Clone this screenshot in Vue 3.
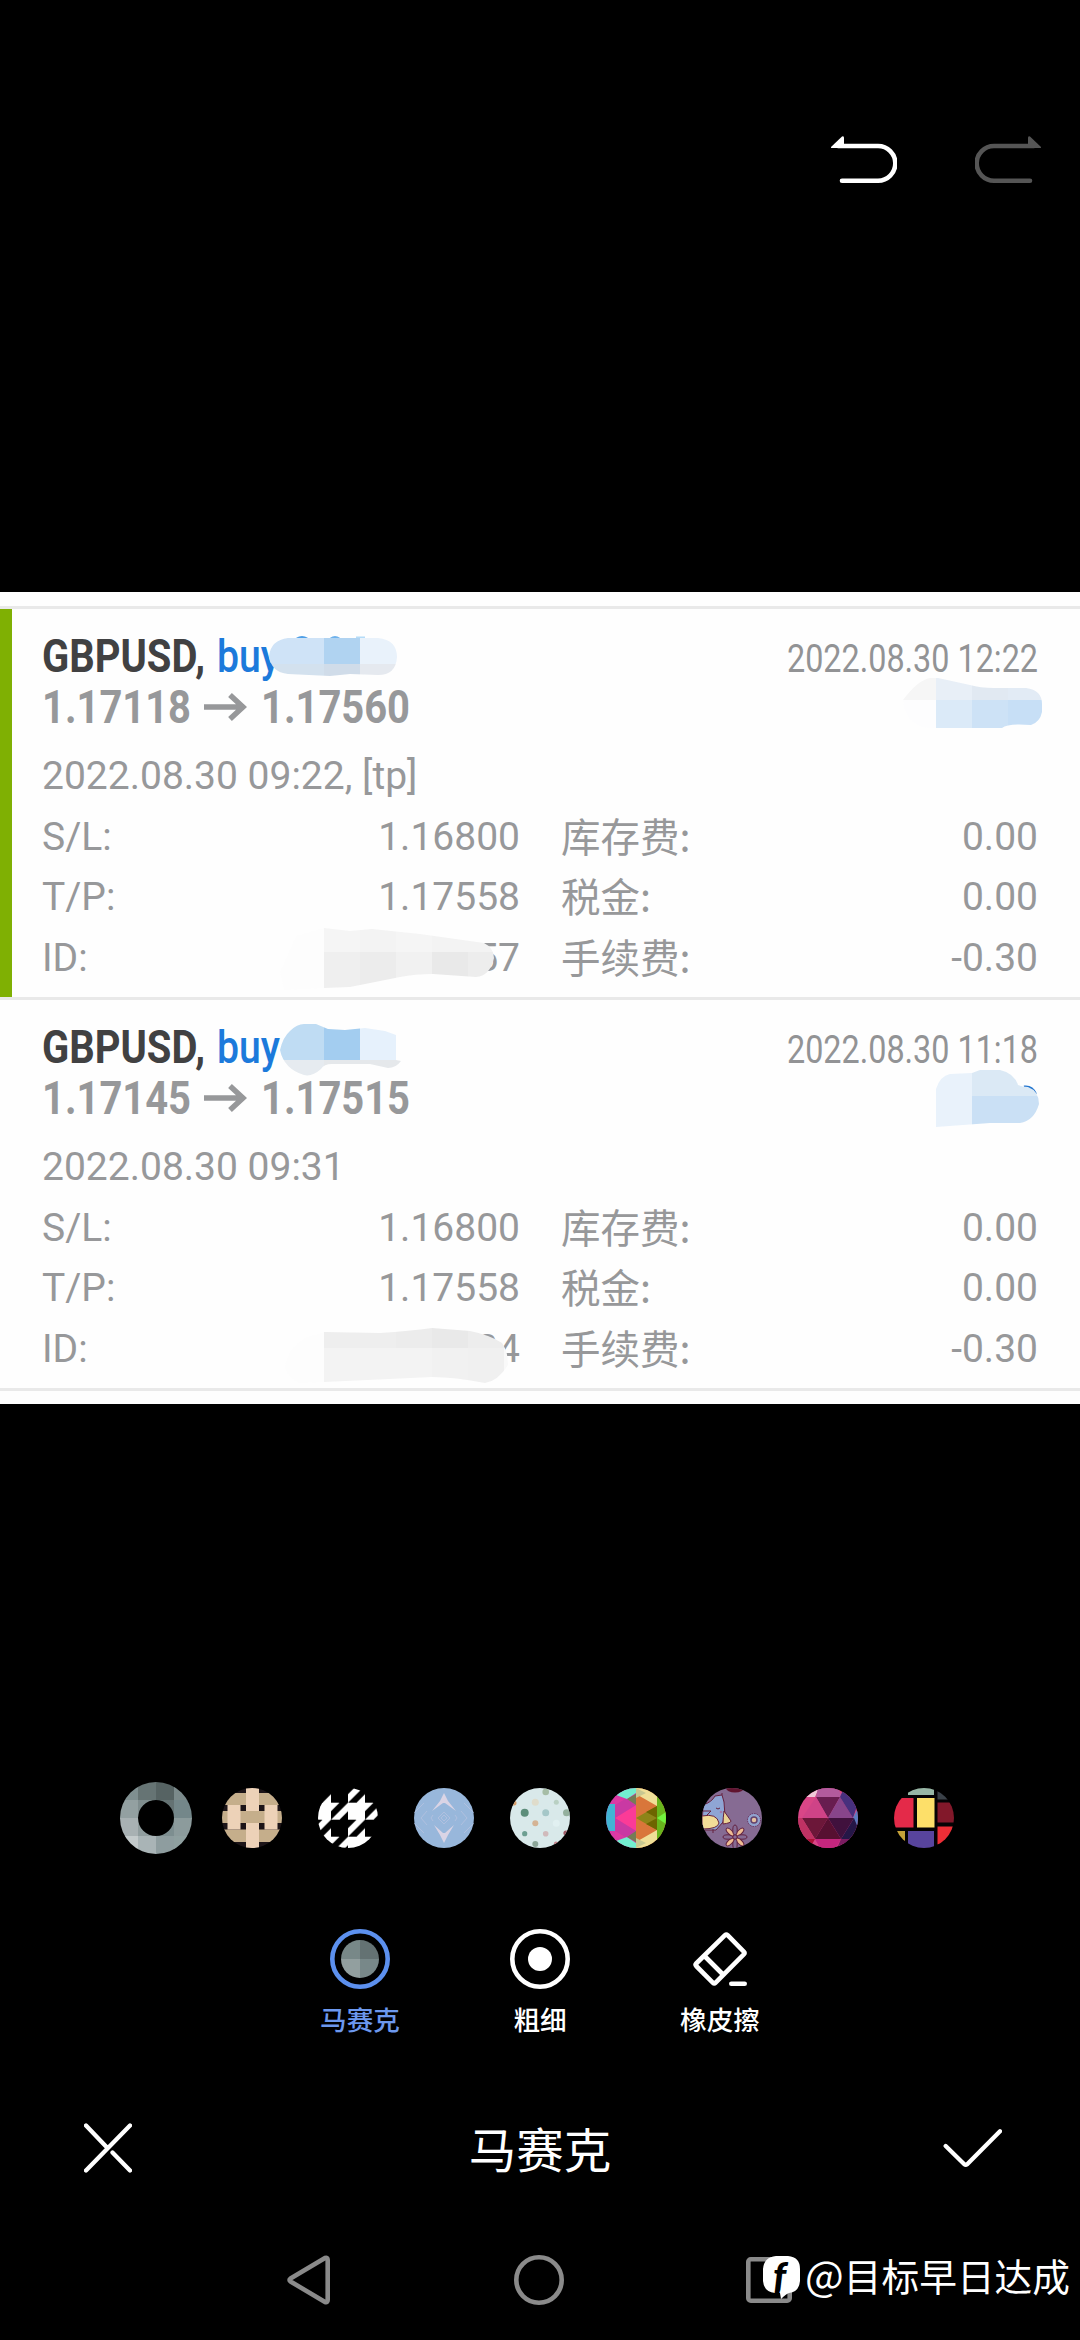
<script setup>
import { h } from 'vue'

// One line of condensed type, squeezed to a fixed width
const FitText = (props) =>
  h('svg', { width: props.w, height: 51, style: { overflow: 'visible' } }, [
    h('text', {
      x: 0, y: 36, textLength: props.w, lengthAdjust: 'spacingAndGlyphs',
      fill: props.color, 'font-size': props.size, 'font-weight': props.weight,
      'font-family': 'Roboto, sans-serif'
    }, props.text)
  ])
FitText.props = ['w', 'size', 'weight', 'color', 'text']

const records = [
  {
    open: '1.17118', close: '1.17560', closed: '2022.08.30 12:22',
    opened: '2022.08.30 09:22, [tp]', id: '57', profit: true,
    marks: [
      {
        shape: 'M288 32H378Q397 34 397 51Q396 69 378 69L350 68L330 70L288 68Q271 66 269 50Q271 34 288 32Z',
        blocks: [
          [268, 30, 56, 28, '#cfe3f7'], [324, 30, 36, 28, '#b0d3f1'], [360, 30, 38, 28, '#e9f2fb'],
          [268, 58, 56, 14, '#d3e1ee'], [324, 58, 36, 14, '#d0dce9'], [360, 58, 38, 14, '#e5e9ef']
        ]
      },
      {
        shape: 'M280 366L296 330L324 322L350 325L372 323L420 328L484 337Q494 342 494 352Q490 370 476 371L433 368Q415 368 400 371L350 381L324 382L284 384Z',
        blocks: [
          [278, 320, 46, 66, '#fdfdfd'],
          [324, 320, 36, 26, '#f5f5f5'], [360, 320, 36, 26, '#f3f3f3'], [396, 320, 36, 26, '#f5f5f5'], [432, 320, 64, 26, '#f3f3f3'],
          [324, 346, 36, 40, '#efefef'], [360, 346, 36, 40, '#ececec'], [396, 346, 36, 40, '#f1f1f1'], [432, 346, 36, 40, '#e9e9e9'], [468, 346, 28, 40, '#ededed']
        ]
      },
      {
        shape: 'M903 94Q918 74 930 72L938 72L970 79Q980 82 994 82H1026Q1042 84 1042 98V106Q1040 116 1031 119Q1008 117 1002 122H930Q905 120 903 94Z',
        blocks: [
          [900, 70, 36, 24, '#f6f6f6'], [936, 70, 36, 24, '#e8eff7'], [972, 70, 36, 24, '#e1e9f2'], [1008, 70, 36, 24, '#e2ebf5'],
          [900, 94, 36, 30, '#fdfdfe'], [936, 94, 36, 30, '#dbeaf8'], [972, 94, 36, 30, '#cde2f6'], [1008, 94, 36, 30, '#c7dff6']
        ]
      }
    ],
    specks: [
      { d: 'M297 33Q302 30 307 33', c: '#4f9fe6' },
      { d: 'M331 33Q335 30 339 33', c: '#6fb2ec' },
      { d: 'M356 32L365 32', c: '#b5dcf8' }
    ]
  },
  {
    open: '1.17145', close: '1.17515', closed: '2022.08.30 11:18',
    opened: '2022.08.30 09:31', id: '34', profit: false,
    marks: [
      {
        shape: 'M280 53Q283 40 290 34Q297 27 304 27H316L328 32L345 33L365 31L385 34L396 38V63L401 64Q396 71 388 71L370 67H332Q324 67 321 72Q312 80 304 78Q284 72 280 53Z',
        blocks: [
          [278, 25, 46, 38, '#bfdcf3'], [324, 25, 36, 38, '#a3cdf0'], [360, 25, 42, 38, '#e6f1fc'],
          [278, 63, 46, 18, '#e6ebf0'], [324, 63, 80, 18, '#e5e8eb']
        ]
      },
      {
        shape: 'M285 370Q287 352 305 341L324 335L380 336Q410 334 432 331L470 334Q490 338 502 346Q508 354 508 368Q498 384 485 386Q455 380 432 380L324 385L300 386Q288 382 285 370Z',
        blocks: [
          [283, 328, 41, 60, '#fdfdfd'],
          [324, 328, 72, 23, '#eeeeee'], [396, 328, 36, 23, '#ececec'], [432, 328, 36, 23, '#e9e9e9'], [468, 328, 42, 23, '#ededed'],
          [324, 351, 108, 38, '#f3f3f3'], [432, 351, 36, 38, '#f1f1f1'], [468, 351, 36, 38, '#f0f0f0'], [504, 351, 6, 38, '#f9f9f9']
        ]
      },
      {
        shape: 'M936 92Q940 79 950 77L972 76L980 73H1000Q1014 76 1018 88Q1022 90 1028 90Q1039 94 1039 107Q1034 124 1020 126L990 126L936 130Z',
        blocks: [
          [934, 71, 38, 60, '#e9f2fb'], [972, 71, 70, 28, '#dbe9f5'], [972, 99, 70, 32, '#cae0f5']
        ]
      }
    ],
    specks: [{ d: 'M1024 90Q1032 89 1035.500 97', c: '#2476cf' }]
  }
]

const ringTiles = [
  ['#7f8f90', '#667474', '#566363', '#7b8a8b'],
  ['#93a0a1', '#7f8d8e', '#647273', '#74878a'],
  ['#a8b1b3', '#909d9e', '#7d8e90', '#8c9b9c'],
  ['#c3cacb', '#a9b4b6', '#8e9d9f', '#8fa0a0']
]
</script>

<template>
  <main class="screen">
    <header class="history">
      <svg width="66" height="50" viewBox="831 134 66 50">
        <path d="M838 146H878A17.3 17.3 0 0 1 878 180.700H842" fill="none" stroke="#fff" stroke-width="4.600" stroke-linecap="round" />
        <path d="M831 147L842 136.500Q844 135.500 844 138V148H832Q830.500 148 831 147Z" fill="#fff" />
      </svg>
      <svg width="66" height="50" viewBox="975 134 66 50">
        <g transform="translate(1872 0) scale(-1 1)">
          <path d="M838 146H878A17.3 17.3 0 0 1 878 180.700H842" fill="none" stroke="#555" stroke-width="4.600" stroke-linecap="round" />
          <path d="M831 147L842 136.500Q844 135.500 844 138V148H832Q830.500 148 831 147Z" fill="#555" />
        </g>
      </svg>
    </header>

    <section class="photo">
      <article v-for="(r, i) in records" :key="i" class="record" :class="{ profit: r.profit }">
        <div class="line">
          <FitText :w="163" :size="46.5" :weight="700" color="#414142" text="GBPUSD," />
          <FitText class="side" :w="63" :size="46.5" :weight="500" color="#1c7adb" text="buy" />
          <FitText class="end" :w="251" :size="38.5" :weight="400" color="#929395" :text="r.closed" />
        </div>
        <div class="line">
          <FitText :w="149" :size="46" :weight="700" color="#97989a" :text="r.open" />
          <svg class="arrow" width="43" height="51" viewBox="0 0 43 51">
            <path d="M0 20H39M26 8L39 20L26 32" fill="none" stroke="#97989a" stroke-width="5.500" />
          </svg>
          <FitText :w="149" :size="46" :weight="700" color="#97989a" :text="r.close" />
        </div>
        <div class="details">
          <div class="row"><span>{{ r.opened }}</span></div>
          <div class="row">
            <span class="key">S/L:</span><span class="val">1.16800</span>
            <span class="name">库存费:</span><span class="val">0.00</span>
          </div>
          <div class="row">
            <span class="key">T/P:</span><span class="val">1.17558</span>
            <span class="name">税金:</span><span class="val">0.00</span>
          </div>
          <div class="row">
            <span class="key">ID:</span><span class="val">{{ r.id }}</span>
            <span class="name">手续费:</span><span class="val">-0.30</span>
          </div>
        </div>
        <svg class="strokes" width="1080" height="391" viewBox="0 0 1080 391">
          <path v-for="(s, k) in r.specks" :key="'s' + k" :d="s.d" fill="none" :stroke="s.c" stroke-width="3" />
          <g v-for="(m, k) in r.marks" :key="k">
            <clipPath :id="`mark-${i}-${k}`"><path :d="m.shape" /></clipPath>
            <g :clip-path="`url(#mark-${i}-${k})`" shape-rendering="crispEdges">
              <rect v-for="(b, n) in m.blocks" :key="n" :x="b[0]" :y="b[1]" :width="b[2]" :height="b[3]" :fill="b[4]" />
            </g>
          </g>
        </svg>
      </article>
      <div class="tail"></div>
    </section>

    <svg class="defs" width="0" height="0">
      <clipPath id="disc"><circle r="30" /></clipPath>
      <clipPath id="ring"><path clip-rule="evenodd" d="M-36 0A36 36 0 1 1 36 0A36 36 0 1 1 -36 0ZM-18 0A18 18 0 1 0 18 0A18 18 0 1 0 -18 0Z" /></clipPath>
      <clipPath id="mini"><circle r="19" /></clipPath>
      <pattern id="houndstooth" x="0" y="-15.300" width="34" height="34" patternUnits="userSpaceOnUse">
        <path d="M0 0H25.500L17 8.500V17H0ZM17 17L34 0V8.500L25.500 17ZM0 25.500L8.500 17H17L0 34ZM17 25.500V34H8.500Z" fill="#fff" />
      </pattern>
    </svg>

    <section class="palette">
      <svg width="72" height="72" viewBox="-36 -36 72 72">
        <g clip-path="url(#ring)">
          <template v-for="(row, y) in ringTiles" :key="y">
            <rect v-for="(c, x) in row" :key="x" :x="x * 18 - 36" :y="y * 18 - 36" width="18.500" height="18.500" :fill="c" />
          </template>
        </g>
      </svg>

      <svg width="60" height="60" viewBox="-30 -30 60 60">
        <g clip-path="url(#disc)">
          <rect x="-30" y="-30" width="60" height="60" fill="#1c1418" />
          <g fill="#c5ae8b">
            <rect x="-30" y="-25" width="60" height="12" /><rect x="-30" y="-7" width="60" height="12" /><rect x="-30" y="11.500" width="60" height="12.500" />
          </g>
          <path d="M-6 -30H7V-7H-6ZM-6 5H7V30H-6ZM-24.500 -13H-11.500V11.500H-24.500ZM12.500 -13H25.500V11.500H12.500Z" fill="#edd2b8" />
        </g>
      </svg>

      <svg width="60" height="60" viewBox="-30 -30 60 60">
        <circle r="30" fill="url(#houndstooth)" />
      </svg>

      <svg width="60" height="60" viewBox="-30 -30 60 60">
        <g clip-path="url(#disc)">
          <rect x="-30" y="-30" width="60" height="60" fill="#98b7db" />
          <path d="M0 -25L4 -17L12 -7L1 -15H-1L-12 -7L-4 -17ZM0 25L4 17L10 7L1 15H-1L-10 7L-4 17Z" fill="#dad4e5" />
          <g fill="none" stroke="#b0c0df" stroke-width="1">
            <path d="M0 -6L6 0L0 6L-6 0ZM-17 -7L-23 0L-17 7M17 -7L23 0L17 7M-11 -3L-13 0L-11 3M11 -3L13 0L11 3M-30 -5L-20 -15M-30 5L-20 15M30 -5L20 -15M30 5L20 15" />
            <path d="M0 -3L3 0L0 3L-3 0Z" />
          </g>
        </g>
      </svg>

      <svg width="60" height="60" viewBox="-30 -30 60 60">
        <g clip-path="url(#disc)">
          <rect x="-30" y="-30" width="60" height="60" fill="#d9e9ea" />
          <circle cx="5.700" cy="-26" r="3.300" fill="#a6bda6" /><circle cx="-4.700" cy="-15.700" r="3.500" fill="#dfdccb" />
          <circle cx="16.300" cy="-15.700" r="2.500" fill="#b9d0c3" /><circle cx="-26" cy="-15" r="2.500" fill="#d99e6b" />
          <circle cx="-15.300" cy="-5.300" r="4" fill="#5d8e7b" /><circle cx="5.700" cy="-5.300" r="3.500" fill="#a5c7c8" />
          <circle cx="26.500" cy="-5.300" r="3.500" fill="#94b09e" /><circle cx="-4.700" cy="5.300" r="3" fill="#d4b394" />
          <circle cx="16.300" cy="5.300" r="3.500" fill="#e1f0f1" /><circle cx="-15.300" cy="15.700" r="2.600" fill="#6d9f92" />
          <circle cx="5.700" cy="15.700" r="2.800" fill="#d0babb" /><circle cx="26" cy="15" r="2.600" fill="#9d5964" />
          <circle cx="-4.700" cy="26" r="3" fill="#8ca699" /><circle cx="16" cy="25.500" r="2" fill="#c5828a" />
        </g>
      </svg>

      <svg width="60" height="60" viewBox="-30 -30 60 60">
        <g clip-path="url(#disc)">
          <rect x="-30" y="-30" width="31" height="60" fill="#d63aa6" />
          <rect x="0" y="-30" width="30" height="60" fill="#d9763a" />
          <path d="M-30 -14H-21V13H-30Z" fill="#41b4d4" />
          <path d="M-21 -22L0 -12V12L-21 22Z" fill="#dd39a3" />
          <path d="M-21 0L0 -13V13Z" fill="#fb3b97" />
          <path d="M-21 -13L-9 -20L0 -13L-21 0ZM-21 13L-9 20L0 13L-21 0Z" fill="#c939a3" />
          <path d="M-20 -23L-9 -30H0V-25L-9 -19ZM-20 23L-9 30H0V25L-9 19Z" fill="#72efd0" />
          <path d="M-9 -19L0 -24V-13ZM-9 19L0 24V13Z" fill="#747d56" />
          <path d="M0 -30H21V-12L0 -24ZM0 30H21V12L0 24Z" fill="#efdf97" />
          <path d="M0 -30L10 -25L0 -20ZM0 30L10 25L0 20Z" fill="#c7c891" />
          <path d="M0 0L21 -12V12Z" fill="#8d8418" /><path d="M10 -6L21 -12V0ZM10 6L21 12V0Z" fill="#6d6400" />
          <path d="M21 -30H30V30H21Z" fill="#68b51d" /><path d="M21 0L30 -6V6Z" fill="#72f33f" />
        </g>
      </svg>

      <svg width="60" height="60" viewBox="-30 -30 60 60">
        <g clip-path="url(#disc)">
          <rect x="-30" y="-30" width="60" height="60" fill="#866b93" />
          <ellipse cx="3" cy="-30" rx="9" ry="4.500" fill="#61142f" />
          <g stroke="#66223f" stroke-width="1">
            <path d="M-29 -13Q-20 -16 -17 -22L-10 -23L-8 -16Q-6 -5 -9 4L-16 12H-30Z" fill="#8fa5d4" />
            <path d="M-8 -7L-1 3Q-1 5 -9 6Q-9 0 -8 -7Z" fill="#ead394" />
            <path d="M-30 -2Q-15 -5 -13 5Q-14 11 -30 11Z" fill="#f2dc98" />
            <path d="M-30 -7H-21L-25 -3M-16 -10Q-14 -8 -12 -10M-19 11V15M-10 -23L-10 -25" fill="none" />
          </g>
          <circle cx="-11" cy="-6" r="1.300" fill="#a37baf" />
          <circle cx="22" cy="2" r="6.500" fill="#91a3cf" stroke="#66305c" stroke-width="1" stroke-dasharray="1.500 1" />
          <circle cx="22" cy="2" r="3" fill="#e5c0a1" stroke="#63436d" stroke-width="1.500" />
          <g stroke="#622240" stroke-width="1">
            <ellipse v-for="a in 8" :key="a" cx="3" cy="12" rx="2.200" ry="5" :transform="`rotate(${a * 45} 3 19)`" :fill="a % 2 ? '#f0bd93' : '#866b93'" />
          </g>
        </g>
      </svg>

      <svg width="60" height="60" viewBox="-30 -30 60 60">
        <g clip-path="url(#disc)">
          <rect x="-30" y="-30" width="60" height="60" fill="#d94687" />
          <path d="M-30 -21L-20 -30H-9L-13 -21Z" fill="#efcad8" /><path d="M-10 -30H10L14 -21H-12Z" fill="#b25b9d" />
          <path d="M-12 -21H12L0 0Z" fill="#681d50" /><path d="M-12 -21L0 0H-26Z" fill="#cf4387" />
          <path d="M12 -21L25 0H0Z" fill="#88458b" /><path d="M12 -21L16 -30L30 -21V-15L25 0Z" fill="#47307d" />
          <path d="M30 -10V10L25 0Z" fill="#5b7dc1" /><path d="M-26 0H0L-13 21Z" fill="#6c1739" />
          <path d="M0 0L13 21H-13Z" fill="#571031" /><path d="M0 0H26L13 21Z" fill="#40113d" />
          <path d="M26 0L30 10L20 30L13 21Z" fill="#251747" /><path d="M-26 0L-13 21H-30V0Z" fill="#bf3263" />
          <path d="M-30 21H-13L-18 30Z" fill="#ad1137" /><path d="M-13 21H13L8 30H-8Z" fill="#c5267e" /><path d="M13 21H24L9 30Z" fill="#7b1c61" />
        </g>
      </svg>

      <svg width="60" height="60" viewBox="-30 -30 60 60">
        <g clip-path="url(#disc)">
          <rect x="-30" y="-30" width="60" height="60" fill="#050305" />
          <rect x="-16" y="-30" width="26" height="7" fill="#98b7a6" /><rect x="13.500" y="-30" width="17" height="11.500" fill="#3a4148" />
          <rect x="-30" y="-20" width="19.500" height="29.500" fill="#e42a49" /><rect x="-7" y="-20" width="17.500" height="29.500" fill="#fddf69" />
          <rect x="13.500" y="-15.500" width="17" height="20" fill="#82182a" /><rect x="-30" y="13" width="11" height="17" fill="#c5a139" />
          <rect x="-16" y="13" width="26" height="17" fill="#58449d" /><rect x="13.500" y="8.500" width="17" height="18" fill="#ed2e36" />
        </g>
      </svg>
    </section>

    <nav class="tools">
      <div class="tool active">
        <svg width="60" height="60" viewBox="-30 -30 60 60">
          <circle r="27.700" fill="none" stroke="#5c90ee" stroke-width="4.600" />
          <g clip-path="url(#mini)">
            <rect x="-19" y="-19" width="19" height="19" fill="#788888" /><rect y="-19" width="19" height="19" fill="#647273" />
            <rect x="-19" width="19" height="19" fill="#929f9f" /><rect width="19" height="19" fill="#788889" />
          </g>
        </svg>
        <span>马赛克</span>
      </div>
      <div class="tool">
        <svg width="60" height="60" viewBox="-30 -30 60 60">
          <circle r="27.700" fill="none" stroke="#fff" stroke-width="4.600" /><circle r="12" fill="#fff" />
        </svg>
        <span>粗细</span>
      </div>
      <div class="tool">
        <svg width="60" height="60" viewBox="-30 -30 60 60" fill="none" stroke="#fff" stroke-width="4.600" stroke-linecap="round" stroke-linejoin="round">
          <path d="M5 -23.800Q6.300 -25 7.600 -23.800L24 -7.200Q25.200 -6 24 -4.800L-4.600 23.800Q-5.800 25 -7 23.800L-23.800 7Q-25 5.700 -23.800 4.500ZM-15.500 -3L3 15.500M11.300 24.700H24.700" />
        </svg>
        <span>橡皮擦</span>
      </div>
    </nav>

    <footer class="confirm">
      <svg width="48" height="50" viewBox="-24 -25 48 50" fill="none" stroke="#fff" stroke-width="4.300" stroke-linecap="round">
        <path d="M-22 -22.500L-1 -0.500M22 -22.500L-22 22.500M4.500 4.500L22 22.500" />
      </svg>
      <h1>马赛克</h1>
      <svg width="59" height="40" viewBox="943 2127 59 40" fill="none" stroke="#fff" stroke-width="4.300" stroke-linecap="round" stroke-linejoin="round">
        <path d="M945.700 2145L964.300 2163.200Q965.700 2164.200 967.200 2163.200L1000 2130.300" />
      </svg>
    </footer>

    <div class="system">
      <svg width="44" height="52" viewBox="287 2254 44 52" fill="none" stroke="#8a8a8a" stroke-width="4.600" stroke-linejoin="round">
        <path d="M290.500 2278.500L325 2258Q327.700 2257 327.700 2260V2300Q327.700 2303 325 2302L290.500 2281.500Q288.500 2280 290.500 2278.500Z" />
      </svg>
      <svg width="50" height="50" viewBox="-25 -25 50 50"><circle r="22.700" fill="none" stroke="#8a8a8a" stroke-width="4.600" /></svg>
      <svg width="46" height="46" viewBox="0 0 46 46"><rect x="2.300" y="2.300" width="41.400" height="41.400" rx="2.500" fill="none" stroke="#8a8a8a" stroke-width="4.600" /></svg>
      <div class="watermark">
        <svg class="logo" width="38" height="43" viewBox="0 0 38 43">
          <path d="M13 0H25Q37 1 37 13V25Q36 36 26 37Q23 38 18 43L17 37H12Q1 36 0 25V13Q1 1 13 0Z" fill="#fff" />
          <text x="10" y="35" font-family="Lato, sans-serif" font-size="39" font-weight="900" font-style="italic" fill="#000">f</text>
        </svg>
        <span><span class="at">@</span>目标早日达成</span>
      </div>
    </div>
  </main>
</template>

<style>
body { background: #000; }
</style>

<style scoped>
.screen {
  width: 1080px;
  height: 2340px;
  background: #000;
  color: #fff;
  overflow: hidden;
  display: flex;
  flex-direction: column;
  font-family: Roboto, "Noto Sans CJK SC", sans-serif;
}
.screen svg { display: block; flex: none; }
.history {
  height: 592px;
  box-sizing: border-box;
  padding: 134px 39px 0 0;
  display: flex;
  justify-content: flex-end;
  align-items: flex-start;
  gap: 78px;
}
.photo {
  height: 812px;
  box-sizing: border-box;
  padding-top: 14px;
  background: #fefefe;
}
.record {
  position: relative;
  height: 391px;
  box-sizing: border-box;
  border-top: 3px solid #e9e9e9;
  padding: 27px 42px 0 42px;
}
.record.profit {
  background: linear-gradient(#7fb003, #7fb003) left top / 12px 100% no-repeat;
}
.line { display: flex; height: 51px; }
.side { margin-left: 12px; }
.end { margin-left: auto; }
.arrow { margin: 0 14px 0 13px; }
.details {
  margin-top: 8px;
  font-size: 39px;
  line-height: 60.600px;
  color: #97989a;
}
.row { display: flex; height: 60.600px; white-space: nowrap; }
.key { width: 100px; }
.key + .val { width: 378px; }
.val { text-align: right; }
.name {
  font-family: "Noto Sans CJK SC", sans-serif;
  font-size: 39.500px;
  line-height: 56.600px;
  margin-left: 41px;
  flex: 1;
}
.strokes { position: absolute; left: 0; top: -3px; }
.tail { height: 3px; background: #e9e9e9; }
.defs { position: absolute; }
.palette {
  margin-top: 378px;
  height: 72px;
  padding-left: 120px;
  display: flex;
  align-items: center;
  gap: 36px;
}
.palette svg:first-child { margin-right: -6px; }
.tools {
  margin-top: 75px;
  display: flex;
  justify-content: center;
}
.tool {
  width: 180px;
  display: flex;
  flex-direction: column;
  align-items: center;
  gap: 10px;
  font: 500 26.600px/40px "Noto Sans CJK SC", sans-serif;
}
.active { color: #6c98ee; }
.confirm {
  margin-top: 70px;
  height: 78px;
  padding: 0 78px 0 84px;
  display: flex;
  align-items: center;
  justify-content: space-between;
}
.confirm h1 {
  margin: 0 -1px 0 4px;
  font: 400 47.500px/76px "Noto Sans CJK SC", sans-serif;
}
.system {
  position: relative;
  margin-top: 65px;
  height: 56px;
  padding: 0 288px 0 287px;
  display: flex;
  align-items: center;
  justify-content: space-between;
}
.watermark {
  position: absolute;
  right: 10px;
  top: -2px;
  display: flex;
  align-items: center;
  gap: 4px;
  font: 400 37.700px/50px "Noto Sans CJK SC", sans-serif;
  white-space: nowrap;
}
.logo { overflow: visible; margin-top: 4px; }
.at { font-size: 41px; line-height: 40px; }
</style>
